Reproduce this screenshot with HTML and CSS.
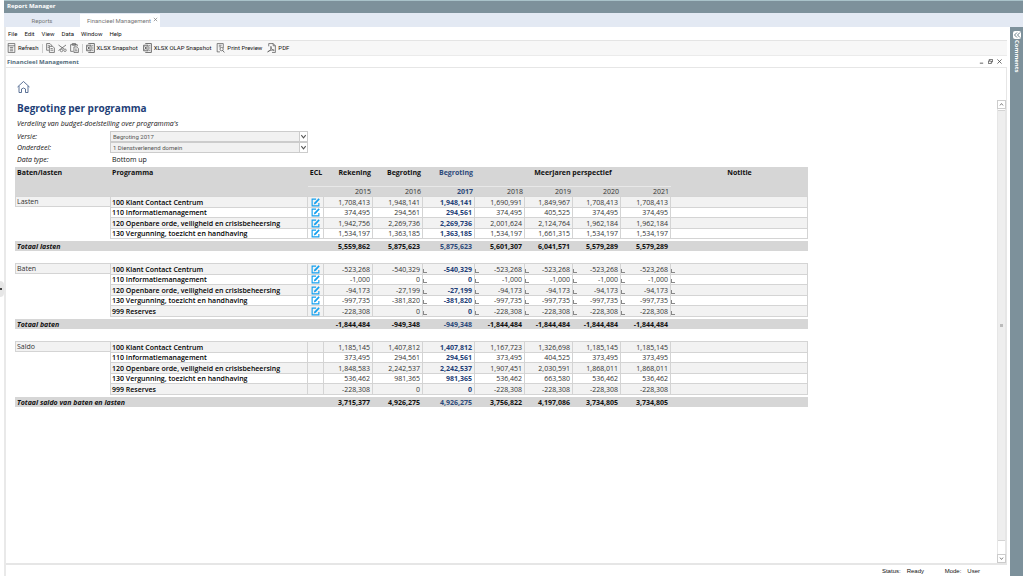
FILE: index.html
```html
<!DOCTYPE html>
<html lang="nl">
<head>
<meta charset="utf-8">
<title>Report Manager</title>
<link rel="stylesheet" href="styles.css">
</head>
<body>
<svg class="defs" aria-hidden="true">
  <symbol id="edit" viewBox="0 0 16 16"><path d="M9 2H2v12h12V9" fill="none" stroke="#14a0ee" stroke-width="2"/><path d="M5 11.500l1-3.500 7.500-7.500 2 2L8.500 10z" fill="#14a0ee"/></symbol>
  <symbol id="xlsx" viewBox="0 0 16 18"><path d="M4 1H15V17H4M1 4h8v10H1zM3 6l4 6M7 6l-4 6M11 5h2M11 9h2M11 13h2" fill="none" stroke="#555" stroke-width="1.500"/></symbol>
  <symbol id="chev" viewBox="0 0 8 8"><path d="M1.500 2.500L4 5.500l2.500-3" fill="none" stroke="#555" stroke-width="1.200"/></symbol>
</svg>
<div class="app">
  <header class="titlebar">Report Manager</header>
  <nav class="tabs">
    <button class="tab">Reports</button>
    <div class="tab active"><button class="tab-name">Financieel Management</button><button class="tab-close" aria-label="Close tab"><svg viewBox="0 0 6 6"><path d="M1 1l4 4M5 1L1 5" stroke="#777" stroke-width=".8"/></svg></button></div>
  </nav>
  <div class="body">
    <main class="main">
      <nav class="menu">
        <button>File</button><button>Edit</button><button>View</button><button>Data</button><button>Window</button><button>Help</button>
      </nav>
      <div class="toolbar">
        <button class="refresh"><svg viewBox="0 0 16 18"><path d="M2 1h12v16H2zM2 5h12M5 8h6M5 11h6M5 14h6" fill="none" stroke="#555" stroke-width="1.300"/></svg>Refresh</button>
        <span class="sep"></span>
        <button aria-label="Copy"><svg viewBox="0 0 16 18"><path d="M5 13H1V1h6l3 3v2M6 6h6l3 3v8H6zM3 5h4M3 8h2M8 10h4M8 13h5" fill="none" stroke="#555" stroke-width="1.300"/></svg></button>
        <button aria-label="Cut"><svg viewBox="0 0 18 18"><path d="M1 3l11 8M1 14L16 3" fill="none" stroke="#555" stroke-width="1.500"/><circle cx="14" cy="13.500" r="2.500" fill="none" stroke="#555" stroke-width="1.300"/><circle cx="7" cy="14" r="2.500" fill="none" stroke="#555" stroke-width="1.300"/></svg></button>
        <button aria-label="Paste"><svg viewBox="0 0 16 18"><path d="M6 15H1V3h12v3M4 3V1h6v3H4M7 7h5l3 3v7H7zM9 11h3M9 14h4" fill="none" stroke="#555" stroke-width="1.300"/></svg></button>
        <span class="sep"></span>
        <button class="wide"><svg><use href="#xlsx"/></svg>XLSX Snapshot</button>
        <button class="wide"><svg><use href="#xlsx"/></svg>XLSX OLAP Snapshot</button>
        <button class="wide"><svg viewBox="0 0 16 18"><path d="M13 9V1H2v15h5M5 4h5M5 7h4" fill="none" stroke="#555" stroke-width="1.300"/><circle cx="10" cy="11" r="3" fill="none" stroke="#555" stroke-width="1.300"/><path d="M12 13.500l3 3.500" stroke="#555" stroke-width="1.500"/></svg>Print Preview</button>
        <button><svg viewBox="0 0 16 18"><path d="M3 6V1h8l4 4v12H9M11 1v4h4M1 16c5-2 7-6 6-10-1 5 3 7 6 7-4-1-8 0-12 3z" fill="none" stroke="#555" stroke-width="1.300"/></svg>PDF</button>
      </div>
      <div class="doc-title"><span>Financieel Management</span>
        <div class="win-buttons">
          <button aria-label="Minimize"><svg viewBox="0 0 6 6"><path d="M1 5h4" stroke="#444"/></svg></button>
          <button aria-label="Restore"><svg viewBox="0 0 6 6"><path d="M.5 2.500h3.500v3H.5zM1.500 2.500v-2h4v3H4" fill="none" stroke="#444" stroke-width=".9"/></svg></button>
          <button aria-label="Close"><svg viewBox="0 0 6 6"><path d="M.5.5l5 5M5.500.5l-5 5" stroke="#444" stroke-width=".9"/></svg></button>
        </div>
      </div>
      <div class="content">
        <section class="report">
          <svg class="home" viewBox="0 0 26 26"><path d="M1 13L13 2l12 11M4 11v13h5v-7q4-4 8 0v7h5V11" fill="none" stroke="#35517e" stroke-width="1.600"/></svg>
          <h1>Begroting per programma</h1>
          <p class="sub">Verdeling van budget-doelstelling over programma's</p>
          <div class="form">
            <label for="versie">Versie:</label>
            <div class="pick"><select id="versie"><option>Begroting 2017</option></select><svg><use href="#chev"/></svg></div>
            <label for="onderdeel">Onderdeel:</label>
            <div class="pick"><select id="onderdeel"><option>1 Dienstverlenend domein</option></select><svg><use href="#chev"/></svg></div>
            <span class="lab">Data type:</span><span class="val">Bottom up</span>
          </div>
          <table>
            <colgroup><col class="c-group"><col class="c-prog"><col class="c-ecl"><col class="c-a"><col class="c-b"><col class="c-c"><col class="c-b"><col class="c-d"><col class="c-d"><col class="c-b"><col class="c-note"></colgroup>
            <thead>
              <tr class="h1"><th class="l">Baten/lasten</th><th class="l">Programma</th><th class="c g">ECL</th><th>Rekening</th><th>Begroting</th><th class="blue">Begroting</th><th class="c" colspan="4">Meerjaren perspectief</th><th class="c">Notitie</th></tr>
              <tr class="h2"><th></th><th></th><th class="g"></th><th class="g">2015</th><th class="g">2016</th><th class="g blue b">2017</th><th class="g">2018</th><th class="g">2019</th><th class="g">2020</th><th class="g">2021</th><th></th></tr>
            </thead>
            <tbody>
              <tr class="odd"><td>Lasten</td><th>100 Klant Contact Centrum</th><td><svg><use href="#edit"/></svg></td><td>1,708,413</td><td>1,948,141</td><td>1,948,141</td><td>1,690,991</td><td>1,849,967</td><td>1,708,413</td><td>1,708,413</td><td></td></tr>
              <tr class="even"><td></td><th>110 Informatiemanagement</th><td><svg><use href="#edit"/></svg></td><td>374,495</td><td>294,561</td><td>294,561</td><td>374,495</td><td>405,525</td><td>374,495</td><td>374,495</td><td></td></tr>
              <tr class="odd"><td></td><th>120 Openbare orde, veiligheid en crisisbeheersing</th><td><svg><use href="#edit"/></svg></td><td>1,942,756</td><td>2,269,736</td><td>2,269,736</td><td>2,001,624</td><td>2,124,764</td><td>1,962,184</td><td>1,962,184</td><td></td></tr>
              <tr class="even"><td></td><th>130 Vergunning, toezicht en handhaving</th><td><svg><use href="#edit"/></svg></td><td>1,534,197</td><td>1,363,185</td><td>1,363,185</td><td>1,534,197</td><td>1,661,315</td><td>1,534,197</td><td>1,534,197</td><td></td></tr>
              <tr class="gap"><td></td><td colspan="10"></td></tr>
              <tr class="total"><th colspan="2">Totaal lasten</th><td></td><td>5,559,862</td><td>5,875,623</td><td class="blue">5,875,623</td><td>5,601,307</td><td>6,041,571</td><td>5,579,289</td><td>5,579,289</td><td></td></tr>
              <tr class="space"><td colspan="11"></td></tr>
            </tbody>
            <tbody class="marked">
              <tr class="odd"><td>Baten</td><th>100 Klant Contact Centrum</th><td><svg><use href="#edit"/></svg></td><td>-523,268</td><td>-540,329</td><td>-540,329</td><td>-523,268</td><td>-523,268</td><td>-523,268</td><td>-523,268</td><td></td></tr>
              <tr class="even"><td></td><th>110 Informatiemanagement</th><td><svg><use href="#edit"/></svg></td><td>-1,000</td><td>0</td><td>0</td><td>-1,000</td><td>-1,000</td><td>-1,000</td><td>-1,000</td><td></td></tr>
              <tr class="odd"><td></td><th>120 Openbare orde, veiligheid en crisisbeheersing</th><td><svg><use href="#edit"/></svg></td><td>-94,173</td><td>-27,199</td><td>-27,199</td><td>-94,173</td><td>-94,173</td><td>-94,173</td><td>-94,173</td><td></td></tr>
              <tr class="even"><td></td><th>130 Vergunning, toezicht en handhaving</th><td><svg><use href="#edit"/></svg></td><td>-997,735</td><td>-381,820</td><td>-381,820</td><td>-997,735</td><td>-997,735</td><td>-997,735</td><td>-997,735</td><td></td></tr>
              <tr class="odd"><td></td><th>999 Reserves</th><td><svg><use href="#edit"/></svg></td><td>-228,308</td><td>0</td><td>0</td><td>-228,308</td><td>-228,308</td><td>-228,308</td><td>-228,308</td><td></td></tr>
              <tr class="gap"><td></td><td colspan="10"></td></tr>
              <tr class="total"><th colspan="2">Totaal baten</th><td></td><td>-1,844,484</td><td>-949,348</td><td class="blue">-949,348</td><td>-1,844,484</td><td>-1,844,484</td><td>-1,844,484</td><td>-1,844,484</td><td></td></tr>
              <tr class="space"><td colspan="11"></td></tr>
            </tbody>
            <tbody>
              <tr class="odd"><td>Saldo</td><th>100 Klant Contact Centrum</th><td></td><td>1,185,145</td><td>1,407,812</td><td>1,407,812</td><td>1,167,723</td><td>1,326,698</td><td>1,185,145</td><td>1,185,145</td><td></td></tr>
              <tr class="even"><td></td><th>110 Informatiemanagement</th><td></td><td>373,495</td><td>294,561</td><td>294,561</td><td>373,495</td><td>404,525</td><td>373,495</td><td>373,495</td><td></td></tr>
              <tr class="odd"><td></td><th>120 Openbare orde, veiligheid en crisisbeheersing</th><td></td><td>1,848,583</td><td>2,242,537</td><td>2,242,537</td><td>1,907,451</td><td>2,030,591</td><td>1,868,011</td><td>1,868,011</td><td></td></tr>
              <tr class="even"><td></td><th>130 Vergunning, toezicht en handhaving</th><td></td><td>536,462</td><td>981,365</td><td>981,365</td><td>536,462</td><td>663,580</td><td>536,462</td><td>536,462</td><td></td></tr>
              <tr class="odd"><td></td><th>999 Reserves</th><td></td><td>-228,308</td><td>0</td><td>0</td><td>-228,308</td><td>-228,308</td><td>-228,308</td><td>-228,308</td><td></td></tr>
              <tr class="gap"><td></td><td colspan="10"></td></tr>
              <tr class="total"><th colspan="2">Totaal saldo van baten en lasten</th><td></td><td>3,715,377</td><td>4,926,275</td><td class="blue">4,926,275</td><td>3,756,822</td><td>4,197,086</td><td>3,734,805</td><td>3,734,805</td><td></td></tr>
            </tbody>
          </table>
        </section>
        <div class="scroll">
          <button aria-label="Scroll up"><svg class="up"><use href="#chev"/></svg></button>
          <div class="track"><div class="thumb"><i class="grip"></i></div></div>
          <button aria-label="Scroll down"><svg><use href="#chev"/></svg></button>
        </div>
      </div>
      <footer class="status"><span>Status:</span><b>Ready</b><span>Mode:</span><b>User</b></footer>
    </main>
    <aside class="comments">
      <button aria-label="Expand comments"><svg viewBox="0 0 8 8"><path d="M4 1.500L1.500 4 4 6.500M7 1.500L4.500 4 7 6.500" fill="none" stroke="#667c87"/></svg></button>
      <span>Comments</span>
    </aside>
  </div>
  <button class="handle" aria-label="Show panel"></button>
</div>
</body>
</html>
```
FILE: styles.css
```css
* { box-sizing: border-box; }
body { margin: 0; background: #fff; font: 6px/10px "Open Sans", "Noto Sans", sans-serif; color: #111; }
button { border: 0; padding: 0; margin: 0; background: none; font: inherit; color: inherit; white-space: nowrap; }
svg { display: block; }
.defs { position: absolute; width: 0; height: 0; }
.app { position: relative; display: flex; flex-direction: column; height: 100vh; padding: 0 1px 0 4px; overflow: hidden; }
.titlebar { height: 13px; border-top: 1px solid #a9c3ca; background: #7d919b; color: #fff; font-weight: 700; line-height: 11px; padding-left: 3px; }
.tabs, .menu, .toolbar, .pick select { font-family: Roboto, "Open Sans", sans-serif; }
.tabs { display: flex; height: 14px; padding-top: 1px; background: #e3e9f3; color: #777; }
.tab { width: 76px; text-align: center; }
.tab.active { display: flex; align-items: center; justify-content: space-between; width: 80px; padding: 0 2px 0 7px; background: #fff; }
.tab-close { align-self: flex-start; margin-top: 3px; }
.tab-close svg { width: 5px; height: 5px; }
.body { flex: 1; display: flex; gap: 3px; min-height: 0; }
.main { flex: 1; display: flex; flex-direction: column; min-width: 0; border-left: 2px solid #e9e9e9; }
.menu { display: flex; gap: 7px; height: 14px; padding-left: 2px; border-bottom: 1px solid #e4e4e4; }
.toolbar { display: flex; align-items: center; gap: 3px; height: 15px; padding-left: 1px; background: #f7f7f7; border-bottom: 1px solid #ebebeb; }
.toolbar button { display: flex; align-items: center; gap: 2px; }
.toolbar .wide { margin-right: 2px; }
.toolbar svg { width: 9px; height: 10px; }
.sep { width: 1px; height: 9px; background: #ccc; }
.doc-title { display: flex; justify-content: space-between; align-items: center; height: 12px; padding: 0 5px 0 1px; border-bottom: 1px solid #e6e6e6; color: #526b7b; font-weight: 700; }
.win-buttons { display: flex; gap: 4px; }
.win-buttons svg { width: 5px; height: 5px; }
.content { flex: 1; display: flex; min-height: 0; border-right: 1px solid #e6e6e6; border-bottom: 2px solid #e6e6e6; }
.report { flex: 1; padding: 12px 0 0 9px; font-size: 7px; }
.home { width: 13px; height: 14px; margin: 0 0 0 2px; }
h1 { margin: 6px 0 0 2px; font-size: 10px; font-weight: 700; line-height: 16px; color: #1f3f77; }
.sub { margin: 3px 0 2px 2px; font-style: italic; line-height: 10px; }
.form { display: grid; grid-template-columns: 95px 198px; }
.form label, .lab { padding-left: 2px; font-style: italic; line-height: 11px; }
.pick { position: relative; }
.pick select { display: block; appearance: none; width: 100%; height: 11px; padding: 0 0 0 2px; border: 1px solid #ccc; border-radius: 0; background: #f1f1f1; color: #555; font-size: 6px; line-height: 9px; }
.pick svg { position: absolute; right: 1px; top: 1px; width: 8px; height: 9px; background: #fff; border-left: 1px solid #ccc; }
.val, .lab { padding-left: 2px; line-height: 14px; }
table { width: 793px; table-layout: fixed; border-collapse: separate; border-spacing: 0; }
.c-group { width: 95px; }
.c-prog { width: 198px; }
.c-ecl { width: 16px; }
.c-a { width: 49px; }
.c-b { width: 50px; }
.c-c { width: 52px; }
.c-d { width: 48px; }
td, th { padding: 0 2px; text-align: right; line-height: 9px; white-space: nowrap; overflow: visible; }
thead th { background: #d6d6d6; color: #111; vertical-align: top; }
.h1 th { height: 19px; line-height: 12px; font-size: 7px; }
.h2 th { height: 10px; line-height: 9px; font-weight: 400; color: #333; }
.h2 .g { border-top: 1px solid #e8e8e8; }
thead th.l { text-align: left; }
thead th.c { text-align: center; padding: 0; }
thead th.blue, .total td.blue { color: #2d4a7b; }
.h2 th.b { font-weight: 700; }
.odd td, .odd th { height: 11px; background: #f2f2f2; }
.even td, .even th { height: 10px; }
.odd td, .odd th, .even td, .even th { border-top: 1px solid #d4d4d4; border-right: 1px solid #d4d4d4; color: #333; }
tbody th { text-align: left; }
.odd th, .even th { color: #000; font-weight: 600; border-left: 1px solid #d4d4d4; padding-left: 1px; }
.odd td:first-child, .even td:first-child { text-align: left; background: #fff; border-right: 0; border-top: 0; }
tbody tr:first-child td:first-child { background: #f2f2f2; border: solid #d4d4d4; border-width: 1px 0 1px 1px; padding-left: 1px; }
.odd td:nth-child(6), .even td:nth-child(6) { color: #1f3f77; font-weight: 700; }
td svg { width: 9px; height: 9px; margin: 0 auto; }
td:nth-child(3) { padding: 0; }
.gap td { height: 3px; }
.gap td + td { border-top: 1px solid #d4d4d4; }
.gap td, .space td { padding: 0; line-height: 0; }
.space td { height: 12px; }
.total td, .total th { height: 10px; background: #d6d6d6; color: #111; font-weight: 700; }
.total td { padding-right: 3px; }
.total th { font-style: italic; }
.marked .odd td:nth-child(n+6), .marked .even td:nth-child(n+6) { position: relative; }
.marked .odd td:nth-child(n+6)::before, .marked .even td:nth-child(n+6)::before { content: ""; position: absolute; left: 0; bottom: 1px; width: 3px; height: 3px; border: solid #888; border-width: 0 0 1px 1px; }
.scroll { display: flex; flex-direction: column; width: 9px; margin: 32px 0 0; }
.scroll button { height: 9px; border: 1px solid #ccc; }
.scroll button svg { width: 7px; height: 7px; padding: 1px; }
.scroll .up { transform: rotate(180deg); }
.track { flex: 1; display: flex; padding: 1px 0 13px; border: solid #e6e6e6; border-width: 0 1px; }
.thumb { flex: 1; display: flex; align-items: center; justify-content: center; background: #eee; border: solid #d4d4d4; border-width: 1px 0; }
.grip { width: 3px; height: 3px; background: #bbb; }
.status { display: flex; justify-content: flex-end; gap: 6px; height: 11px; padding-right: 27px; font-family: "Liberation Sans", sans-serif; line-height: 12px; }
.status b { font-weight: 400; min-width: 32px; }
.status b:last-child { min-width: 12px; }
.comments { display: flex; flex-direction: column; align-items: center; gap: 1px; width: 13px; padding-top: 4px; background: #7d919b; color: #fff; font-weight: 700; }
.comments button { padding: 0; border-radius: 2px; background: #fff; }
.comments svg { width: 8px; height: 8px; }
.comments span { writing-mode: vertical-rl; }
.handle { position: absolute; left: 0; top: 281px; width: 4px; height: 16px; border-radius: 0 4px 4px 0; background: radial-gradient(circle at 1px 8px, #444 1px, #e6e6e6 1px); }
```
